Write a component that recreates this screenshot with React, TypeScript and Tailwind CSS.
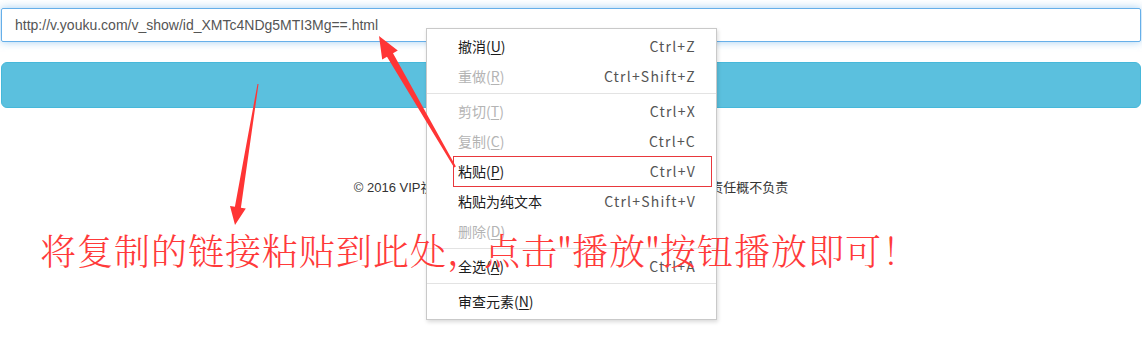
import React from "react";

type Item = { label: string; key: string; tail: string; shortcut: string; disabled?: boolean; boxed?: boolean };

const groups: Item[][] = [
  [
    { label: "撤消(", key: "U", tail: ")", shortcut: "Ctrl+Z" },
    { label: "重做(", key: "R", tail: ")", shortcut: "Ctrl+Shift+Z", disabled: true },
  ],
  [
    { label: "剪切(", key: "T", tail: ")", shortcut: "Ctrl+X", disabled: true },
    { label: "复制(", key: "C", tail: ")", shortcut: "Ctrl+C", disabled: true },
    { label: "粘贴(", key: "P", tail: ")", shortcut: "Ctrl+V", boxed: true },
    { label: "粘贴为纯文本", key: "", tail: "", shortcut: "Ctrl+Shift+V" },
    { label: "删除(", key: "D", tail: ")", shortcut: "", disabled: true },
  ],
  [{ label: "全选(", key: "A", tail: ")", shortcut: "Ctrl+A" }],
  [{ label: "审查元素(", key: "N", tail: ")", shortcut: "" }],
];

function ContextMenu() {
  return (
    <div className="absolute left-[426px] top-[28px] w-[291px] bg-white border border-[#c9c9c9] shadow-[1px_2px_4px_rgba(0,0,0,0.15)] pt-[2px] pb-[3px] font-['Noto_Sans_CJK_SC','Noto_Sans',sans-serif] text-[14px]">
      {groups.map((group, gi) => (
        <div key={gi}>
          {gi > 0 && <div className="my-[2px] h-px bg-[#e3e3e3]" />}
          {group.map((item) => (
            <div key={item.label} className="relative flex items-center justify-between h-[30px] pl-[31px] pr-[20px]">
              <span className={item.disabled ? "text-[#b4b4b4]" : "text-[#1c1c1c]"}>
                {item.label}
                {item.key && <span className="underline underline-offset-2">{item.key}</span>}
                {item.tail}
              </span>
              <span className="text-[#555] tracking-[1.2px]">{item.shortcut}</span>
              {item.boxed && (
                <div className="absolute top-0 left-[26px] right-[4px] h-[31px] border border-[#e8383d]" />
              )}
            </div>
          ))}
        </div>
      ))}
    </div>
  );
}

export default function App() {
  return (
    <div className="relative w-[1142px] h-[338px] bg-white overflow-hidden font-['Liberation_Sans',Arial,sans-serif]">
      <div className="px-[1px] pt-[8px]">
        {/* url input */}
        <div className="h-[34px] flex items-center px-[13px] border border-[#66afe9] shadow-[0_0_8px_rgba(102,175,233,0.6)] rounded-[2px] text-[14px] text-[#555]">
          http://v.youku.com/v_show/id_XMTc4NDg5MTI3Mg==.html
        </div>

        {/* play button */}
        <div className="mt-[20px] h-[46px] rounded-[6px] bg-[#5bc0de] border border-[#46b8da]" />

        {/* footer */}
        <div className="mt-[70px] h-[20px] flex items-center justify-center text-[13px] text-[#333] font-['Liberation_Sans','Noto_Sans_CJK_SC',sans-serif]">
          © 2016 VIP视频解析 本站仅供学习交流，由此产生的一切后果责任概不负责
        </div>
      </div>

      <ContextMenu />

      {/* annotation */}
      <div className="absolute left-[40px] top-[232px] text-[36px] leading-[36px] tracking-[1px] text-[#ff3a3a] whitespace-nowrap font-['Noto_Serif_CJK_SC','Noto_Sans_CJK_SC',serif] font-light">
        将复制的链接粘贴到此处，点击"播放"按钮播放即可！
      </div>

      <svg className="absolute inset-0 pointer-events-none" width="1142" height="338">
        <polygon
          fill="#ff3535"
          points="258.5,84.1 240.9,207.7 245.8,208.5 235,225 230,205.9 234.9,206.7 257.5,83.9"
        />
        <polygon
          fill="#ff3535"
          points="455.9,166.5 393,53.2 397.8,50.5 379,36 382.2,59.5 387,56.8 454.1,167.5"
        />
      </svg>
    </div>
  );
}
